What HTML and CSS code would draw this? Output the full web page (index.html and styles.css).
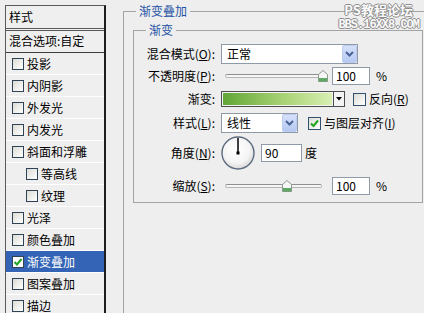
FILE: index.html
```html
<!DOCTYPE html>
<html lang="zh-CN">
<head>
  <meta charset="UTF-8">
  <title>图层样式 - 渐变叠加</title>
  <link rel="stylesheet" href="styles.css">
</head>
<body>
  <!-- 样式列表 -->
  <div class="styles-list">
    <div class="list-head">样式</div>
    <div class="list-blend">混合选项:自定</div>
    <div class="list-item"><span class="chk"></span>投影</div>
    <div class="list-item"><span class="chk"></span>内阴影</div>
    <div class="list-item"><span class="chk"></span>外发光</div>
    <div class="list-item"><span class="chk"></span>内发光</div>
    <div class="list-item"><span class="chk"></span>斜面和浮雕</div>
    <div class="list-item sub"><span class="chk"></span>等高线</div>
    <div class="list-item sub"><span class="chk"></span>纹理</div>
    <div class="list-item"><span class="chk"></span>光泽</div>
    <div class="list-item"><span class="chk"></span>颜色叠加</div>
    <div class="list-item selected">
      <span class="chk"><svg width="10" height="10" viewBox="0 0 10 10"><path d="M1.5 5 L4 7.5 L8.5 2" fill="none" stroke="#22a322" stroke-width="2"/></svg></span>渐变叠加
    </div>
    <div class="list-item"><span class="chk"></span>图案叠加</div>
    <div class="list-item"><span class="chk"></span>描边</div>
  </div>

  <!-- 设置面板 -->
  <div class="panel">
    <fieldset class="group outer">
      <legend>渐变叠加</legend>
      <fieldset class="group inner">
        <legend>渐变</legend>
        <div class="form-grid">
          <label>混合模式(<u>O</u>):</label>
          <div class="ctrl">
            <div class="select w-mode">
              <span>正常</span>
              <span class="drop"><svg width="9" height="6" viewBox="0 0 9 6"><path d="M1 1 L4.5 4.5 L8 1" fill="none" stroke="#4a6396" stroke-width="2"/></svg></span>
            </div>
          </div>

          <label>不透明度(<u>P</u>):</label>
          <div class="ctrl">
            <div class="slider">
              <div class="track"></div>
              <svg class="thumb" style="left: 97px" width="10" height="12" viewBox="0 0 10 12"><path d="M0.5 4.5 L5 0.5 L9.5 4.5 L9.5 11.5 L0.5 11.5 Z" fill="#f7f7f7" stroke="#8a9a8a"/><rect x="1" y="8" width="8" height="3.5" fill="#5fa865"/></svg>
            </div>
            <div class="num">100</div>
            <span class="unit">%</span>
          </div>

          <label>渐变:</label>
          <div class="ctrl">
            <div class="grad">
              <div class="grad-fill"></div>
              <div class="grad-arrow"><svg width="6" height="4" viewBox="0 0 6 4"><path d="M0 0 L6 0 L3 3.5 Z" fill="#000"/></svg></div>
            </div>
            <span class="box gap-reverse"></span>
            <span class="box-text">反向(<u>R</u>)</span>
          </div>

          <label>样式(<u>L</u>):</label>
          <div class="ctrl">
            <div class="select w-style">
              <span>线性</span>
              <span class="drop"><svg width="9" height="6" viewBox="0 0 9 6"><path d="M1 1 L4.5 4.5 L8 1" fill="none" stroke="#4a6396" stroke-width="2"/></svg></span>
            </div>
            <span class="box gap-align"><svg width="11" height="11" viewBox="0 0 11 11"><path d="M2 5.5 L4.5 8 L9 2.5" fill="none" stroke="#22a322" stroke-width="2"/></svg></span>
            <span class="box-text">与图层对齐(<u>I</u>)</span>
          </div>

          <label>角度(<u>N</u>):</label>
          <div class="ctrl">
            <svg class="dial" width="34" height="34" viewBox="0 0 34 34">
              <defs>
                <radialGradient id="dialFill" cx="45%" cy="40%" r="60%">
                  <stop offset="0" stop-color="#ffffff"/>
                  <stop offset="0.7" stop-color="#f4f4f4"/>
                  <stop offset="1" stop-color="#d8d8d8"/>
                </radialGradient>
              </defs>
              <circle cx="17" cy="17" r="16" fill="url(#dialFill)" stroke="#5d6b80" stroke-width="1.4"/>
              <line x1="17" y1="17" x2="17" y2="2" stroke="#000" stroke-width="1.5"/>
              <rect x="15.5" y="15.5" width="3" height="3" fill="#000"/>
            </svg>
            <div class="num num-angle">90</div>
            <span class="unit unit-deg">度</span>
          </div>

          <label>缩放(<u>S</u>):</label>
          <div class="ctrl">
            <div class="slider">
              <div class="track"></div>
              <svg class="thumb" style="left: 61px" width="10" height="12" viewBox="0 0 10 12"><path d="M0.5 4.5 L5 0.5 L9.5 4.5 L9.5 11.5 L0.5 11.5 Z" fill="#f7f7f7" stroke="#8a9a8a"/><rect x="1" y="8" width="8" height="3.5" fill="#5fa865"/></svg>
            </div>
            <div class="num">100</div>
            <span class="unit">%</span>
          </div>
        </div>
      </fieldset>
    </fieldset>
  </div>

  <div class="watermark">
    <div class="wm-title">PS教程论坛</div>
    <div class="wm-url">BBS.16XX8.COM</div>
  </div>
</body>
</html>
```

FILE: styles.css
```css
/* Geral */
* {
  margin: 0;
  padding: 0;
  box-sizing: border-box;
}

html {
  overflow: hidden;
}

body {
  position: relative;
  display: flex;
  align-items: flex-start;
  width: 424px;
  height: 313px;
  overflow: hidden;
  background: #eeeeee;
  font-family: "Noto Sans CJK SC", "Noto Sans", sans-serif;
  font-size: 12px;
  line-height: 14px;
  color: #000;
}

u {
  text-decoration: underline;
}

/* Lista de estilos */
.styles-list {
  flex-shrink: 0;
  width: 101px;
  margin: 5px 0 0 5px;
  border: 1px solid #5a5a5a;
  border-right: 2px solid #1e1e1e;
  background: #efefef;
}

.list-head {
  height: 25px;
  padding: 4px 3px 0;
  border-bottom: 3px double #5a5a5a;
}

.list-blend {
  height: 22px;
  padding: 3px 3px 0;
  border-bottom: 1px solid #3c3c3c;
}

.list-item {
  display: flex;
  align-items: center;
  height: 22px;
  padding-left: 6px;
  border-bottom: 1px solid #ffffff;
}

.list-item.sub {
  padding-left: 20px;
}

.list-item.selected {
  background: #3464b5;
  color: #fff;
}

.chk {
  display: flex;
  align-items: center;
  justify-content: center;
  width: 12px;
  height: 12px;
  margin-right: 3px;
  border: 1px solid #2f4256;
  background: linear-gradient(135deg, #dcdcd6, #ffffff);
}

.selected .chk {
  background: #fff;
}

/* Painel */
.panel {
  flex-shrink: 0;
  margin: 4px 0 0 17px;
}

.group {
  border: 1px solid #a3a3a3;
}

.group legend {
  padding: 0 3px;
  line-height: 14px;
  color: #1f52a6;
}

.outer {
  width: 320px;
  min-height: 330px;
  padding: 0 0 0 9px;
}

.outer > legend {
  margin-left: 3px;
}

.inner {
  width: 290px;
  margin-top: 5px;
  padding: 6px 0 0 0;
}

.inner > legend {
  margin-left: 12px;
}

/* Formulário */
.form-grid {
  display: grid;
  grid-template-columns: 81px auto;
  grid-template-rows: 21px 24px 22px 26px 34px 32px;
  column-gap: 6px;
  align-items: center;
}

.form-grid > label {
  text-align: right;
  white-space: nowrap;
}

.ctrl {
  display: flex;
  align-items: center;
}

.select {
  display: flex;
  align-items: center;
  height: 20px;
  padding-left: 5px;
  background: #fff;
  border: 1px solid #8e9aa8;
}

.select .drop {
  display: flex;
  align-items: center;
  justify-content: center;
  width: 15px;
  height: 18px;
  margin-left: auto;
  background: linear-gradient(#d6e1fa, #b6c9f2);
  border: 1px solid #bccbee;
  border-radius: 2px;
}

.w-mode {
  width: 137px;
}

.w-style {
  width: 77px;
}

.slider {
  position: relative;
  width: 108px;
  height: 14px;
}

.slider .track {
  width: 97px;
  height: 4px;
  margin: 5px 0 0 4px;
  border: 1px solid #b5b5b5;
  border-top-color: #8f8f8f;
  border-radius: 2px;
  background: #f6f6f6;
}

.slider .thumb {
  position: absolute;
  top: 1px;
}

.num {
  height: 18px;
  width: 38px;
  margin-left: 3px;
  padding-left: 3px;
  line-height: 16px;
  background: #fff;
  border: 1px solid #8e9aa8;
}

.unit {
  margin-left: 6px;
}

.num-angle {
  width: 41px;
  margin-left: 6px;
}

.unit-deg {
  margin-left: 3px;
}

.grad {
  display: flex;
  height: 16px;
  border: 1px solid #4d4d4d;
}

.grad-fill {
  width: 111px;
  border: 1px solid #f4f4f4;
  background: linear-gradient(to right, #62a636, #a8d274 55%, #d8efb2);
}

.grad-arrow {
  display: flex;
  align-items: center;
  justify-content: center;
  width: 11px;
  border-left: 1px solid #4d4d4d;
  background: #f4f4f4;
}

.box {
  display: flex;
  align-items: center;
  justify-content: center;
  width: 13px;
  height: 13px;
  border: 1px solid #33506e;
  background: linear-gradient(135deg, #dcdcd6, #ffffff);
}

.gap-reverse {
  margin-left: 8px;
}

.gap-align {
  margin-left: 10px;
}

.box-text {
  margin-left: 3px;
}

.dial {
  display: block;
}

/* Marca d'água */
.watermark {
  position: absolute;
  top: 3px;
  right: 5px;
  text-align: center;
  color: #fbfbfb;
  font-weight: bold;
  text-shadow: 1px 0 #8c8c8c, -1px 0 #8c8c8c, 0 1px #8c8c8c, 0 -1px #8c8c8c;
}

.wm-title {
  font-size: 13px;
  line-height: 14px;
}

.wm-url {
  margin-top: 3px;
  font-family: "Liberation Mono", monospace;
  font-size: 12px;
  line-height: 11px;
  letter-spacing: -1px;
}
```
